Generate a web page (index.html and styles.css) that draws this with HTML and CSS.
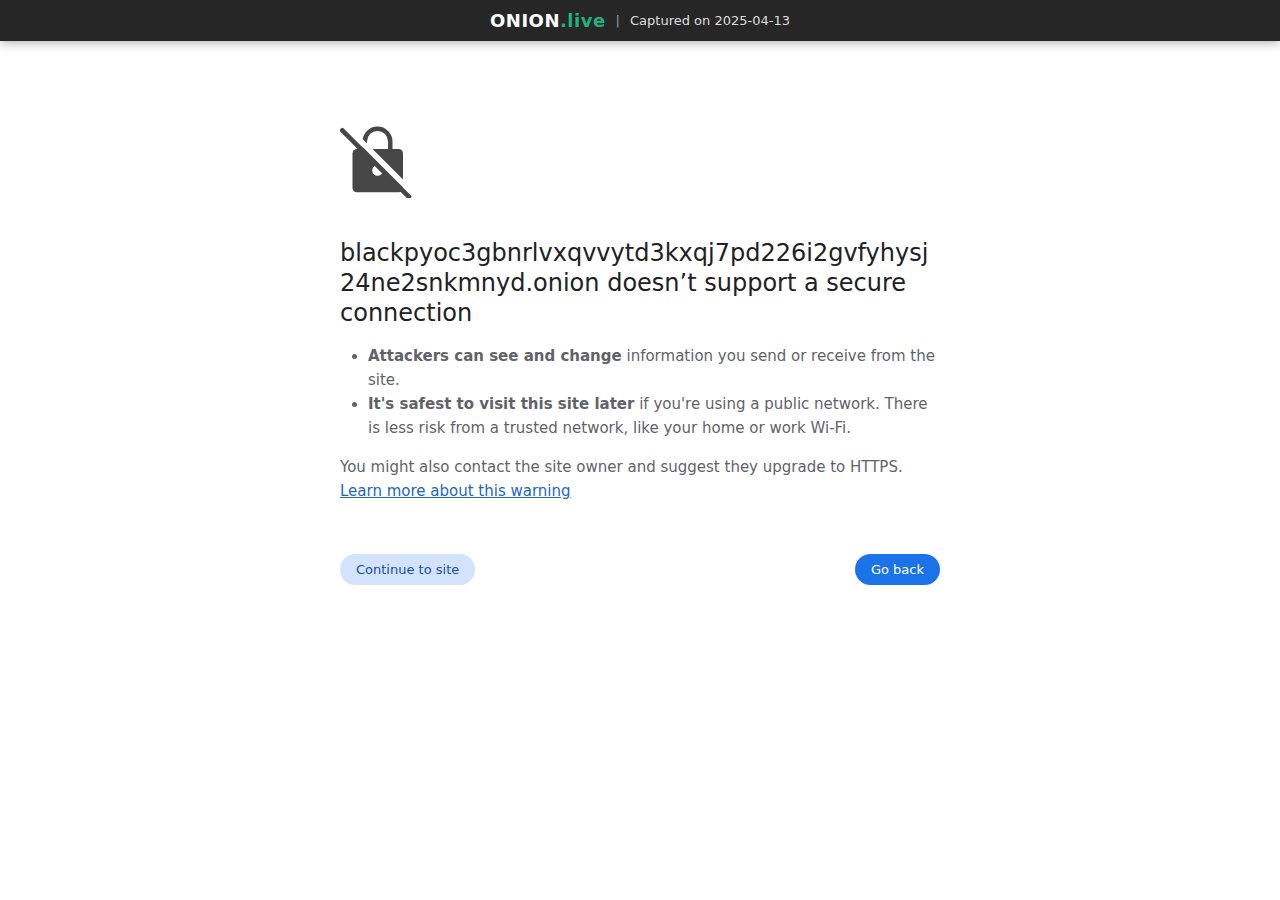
FILE: index.html
```html
<!DOCTYPE html>
<html lang="en">
<head>
<meta charset="utf-8">
<meta name="viewport" content="width=device-width, initial-scale=1">
<title>Site doesn’t support a secure connection</title>
<link rel="stylesheet" href="styles.css">
</head>
<body>
<header class="topbar">
  <div class="brand">ONION<span class="brand-suffix">.live</span></div>
  <span class="divider">|</span>
  <span class="captured">Captured on 2025-04-13</span>
</header>
<main class="interstitial">
  <svg class="icon" viewBox="0 0 72 72" aria-hidden="true">
    <path d="M24.75 24V15.5a12.75 12.75 0 0 1 25.5 0V24" fill="none" stroke="#474747" stroke-width="4.5"/>
    <rect x="12.5" y="23" width="50.5" height="43.3" rx="4.5" fill="#474747"/>
    <circle cx="37.5" cy="44.5" r="5.3" fill="#fff"/>
    <path d="M8 -1.5L72 62.5V70.5L0 -1.5Z" fill="#fff"/>
    <path d="M2.3 4.3L69 71" fill="none" stroke="#474747" stroke-width="4.6" stroke-linecap="round"/>
  </svg>
  <h1 class="title">blackpyoc3gbnrlvxqvvytd3kxqj7pd226i2gvfyhysj24ne2snkmnyd.onion doesn’t support a secure connection</h1>
  <ul class="risks">
    <li><strong>Attackers can see and change</strong> information you send or receive from the site.</li>
    <li><strong>It's safest to visit this site later</strong> if you're using a public network. There is less risk from a trusted network, like your home or work Wi-Fi.</li>
  </ul>
  <p class="advice">You might also contact the site owner and suggest they upgrade to HTTPS. <a class="learn-more" href="#">Learn more about this warning</a></p>
  <div class="actions">
    <button class="button button-secondary" type="button">Continue to site</button>
    <button class="button button-primary" type="button">Go back</button>
  </div>
</main>
</body>
</html>
```
FILE: styles.css
```css
* {
  box-sizing: border-box;
}

body {
  margin: 0;
  background: #fff;
  color: #5f6368;
  font-family: "DejaVu Sans", sans-serif;
  font-size: 15px;
  line-height: 24px;
}

.topbar {
  display: flex;
  align-items: center;
  justify-content: center;
  gap: 10px;
  padding: 10px;
  background: #262626;
  box-shadow: 0 2px 10px rgba(0, 0, 0, 0.3);
  color: #ddd;
  font-size: 13px;
  line-height: 21px;
}

.brand {
  color: #fff;
  font-size: 18px;
  font-weight: bold;
  letter-spacing: 0.5px;
}

.brand-suffix {
  color: #1db37c;
}

.divider {
  color: #999;
}

.interstitial {
  max-width: 600px;
  margin: 0 auto;
  padding-top: 85px;
}

.icon {
  display: block;
  width: 72px;
  height: 72px;
  margin-bottom: 40px;
}

.title {
  margin: 0 0 16px;
  color: #202124;
  font-size: 24px;
  font-weight: normal;
  line-height: 30px;
  overflow-wrap: anywhere;
}

.risks {
  margin: 0 0 15px;
  padding-left: 28px;
}

.advice {
  margin: 0;
}

.learn-more {
  color: #1a67c4;
}

.actions {
  display: flex;
  justify-content: space-between;
  margin-top: 51px;
}

.button {
  padding: 8px 16px;
  border: 0;
  border-radius: 20px;
  font-family: inherit;
  font-size: 13px;
  line-height: 15px;
  cursor: pointer;
}

.button-secondary {
  background: #d3e3fd;
  color: #174ea6;
}

.button-primary {
  background: #1a73e8;
  color: #fff;
}
```
